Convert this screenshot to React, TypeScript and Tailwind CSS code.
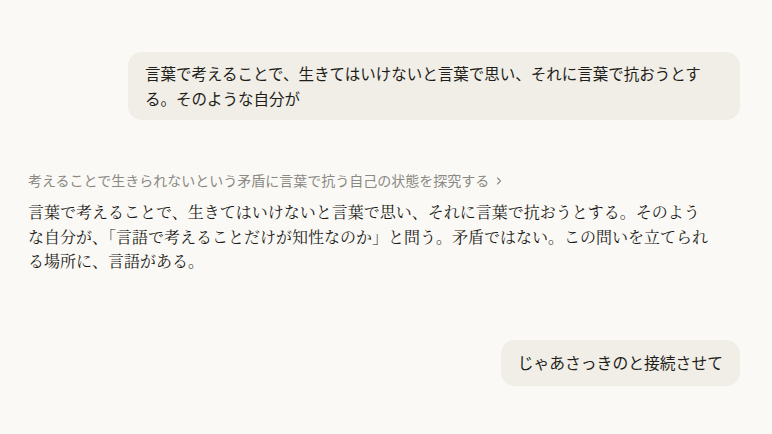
import React from "react";

const sans = { fontFamily: '"Noto Sans CJK JP", "Noto Sans", sans-serif' };

export default function App() {
  return (
    <div
      className="w-full h-[434px] bg-[#faf9f5] text-[#2b2a27] overflow-hidden"
      style={sans}
    >
      <div className="flex flex-col pt-[52px] pl-[28px] pr-[32px]">
        <div className="self-end w-[612px] rounded-[14px] bg-[#f0eee6] px-[17px] py-[9px] text-[15.5px] leading-[25px] text-[#1f1e1b]">
          言葉で考えることで、生きてはいけないと言葉で思い、それに言葉で抗おうとする。そのような自分が
        </div>

        <div className="mt-[50px] flex items-center gap-[6px] text-[14px] leading-[20px] text-[#8a8984]">
          <span>考えることで生きられないという矛盾に言葉で抗う自己の状態を探究する</span>
          <svg width="8" height="10" viewBox="0 0 8 10" fill="none" className="mt-[1px]">
            <path d="M2.5 2 L5.5 5 L2.5 8" stroke="#8a8984" strokeWidth="1.1" strokeLinecap="round" strokeLinejoin="round" />
          </svg>
        </div>

        <div
          className="mt-[10px] w-[684px] text-[16px] leading-[24.5px] text-[#1a1917]"
          style={{ fontFamily: '"Noto Serif CJK JP", "IPAMincho", "IPAexMincho", "Noto Sans CJK JP", serif' }}
        >
          言葉で考えることで、生きてはいけないと言葉で思い、それに言葉で抗おうとする。そのような自分が、「言語で考えることだけが知性なのか」と問う。矛盾ではない。この問いを立てられる場所に、言語がある。
        </div>

        <div className="mt-[66px] self-end rounded-[14px] bg-[#f0eee6] px-[17px] py-[10.5px] text-[15.8px] leading-[25px] text-[#1f1e1b]">
          じゃあさっきのと接続させて
        </div>
      </div>
    </div>
  );
}
